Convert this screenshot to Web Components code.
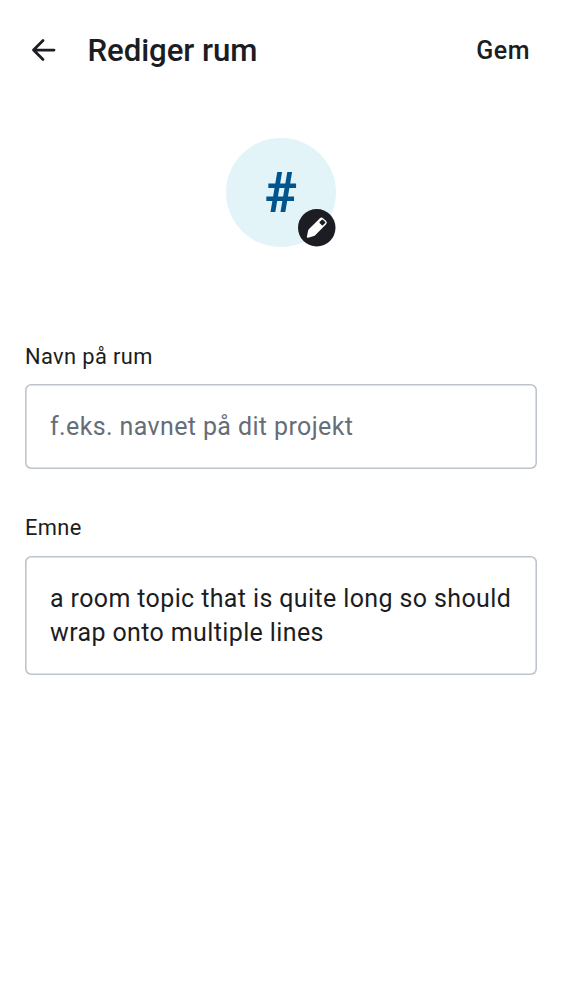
<!DOCTYPE html>
<html lang="da">
<head>
<meta charset="utf-8">
<title>Rediger rum</title>
<style>
html, body { margin: 0; background: #fff; }
body { font-family: Roboto, sans-serif; color: #1b1d22; }
</style>
</head>
<body>
<room-edit-page></room-edit-page>
<script>
class BaseElement extends HTMLElement {
  constructor() {
    super();
    this.attachShadow({ mode: "open" }).innerHTML = this.constructor.markup;
  }
}

class TopBar extends BaseElement {
  static markup = `
    <style>
      :host { display: flex; align-items: center; height: 100px; padding: 0 32px 0 31px; box-sizing: border-box; }
      svg { width: 25px; height: 25px; display: block; flex: none; }
      h1 { margin: 0 auto 0 31.4px; padding-top: 1px; font-size: 31.2px; line-height: 44px; font-weight: 500; letter-spacing: -.05px; white-space: nowrap; }
      .action { font-size: 25px; line-height: 38px; padding-top: 1px; font-weight: 500; letter-spacing: .5px; }
    </style>
    <svg viewBox="0 0 25 25" fill="none" stroke="currentColor" stroke-width="2.8" stroke-linecap="round" stroke-linejoin="round"><path d="M23 12.1H2.7M12 2.6L2.5 12.1l9.5 9.5"/></svg>
    <h1><slot></slot></h1>
    <span class="action"><slot name="action"></slot></span>`;
}

class RoomAvatar extends BaseElement {
  static markup = `
    <style>
      :host { display: grid; place-items: center; position: relative; width: 109.4px; height: 109.4px; border-radius: 50%; background: #e3f4f8; color: #00558f; font-size: 54.6px; line-height: 64px; font-weight: 700; }
      .symbol { padding-top: 2px; }
      .edit { position: absolute; right: 0; bottom: 0; width: 37.5px; height: 37.5px; }
    </style>
    <span class="symbol"><slot></slot></span>
    <svg class="edit" viewBox="0 0 37.5 37.5"><circle cx="18.75" cy="18.75" r="18.75" fill="#1b1d22"/><path fill="#fff" d="M8.9 27.4L10.2 21.2Q10.4 20.5 11 19.9L21.9 9.3Q23.5 7.9 25.1 9.3L28.1 12.1Q29.6 13.7 28.1 15.3L17.2 26.3Q16.6 26.9 15.9 27.1L10.1 28.8Q8.6 29 8.9 27.4Z"/><path fill="#1b1d22" d="M24.4 11.2l2.3 2.3-2.3 2.3-2.3-2.3z" stroke="#1b1d22" stroke-width="1.4" stroke-linejoin="round"/></svg>`;
}

class FormField extends BaseElement {
  static markup = `
    <style>
      :host { display: block; }
      .label { font-size: 21.85px; line-height: 31px; letter-spacing: .39px; margin-bottom: 12.5px; }
      .box { box-sizing: border-box; box-shadow: inset 0 0 0 1.56px #bdc4cc; border-radius: 6.25px; padding: 26px 21px 24.4px 25px; font-size: 24.97px; line-height: 34.3px; letter-spacing: .39px; }
      :host([placeholder]) .box { color: #656d77; }
    </style>
    <div class="label"><slot name="label"></slot></div>
    <div class="box"><slot></slot></div>`;
}

class RoomEditPage extends BaseElement {
  static markup = `
    <style>
      :host { display: flex; flex-direction: column; box-sizing: border-box; height: 1000px; }
      .avatar { display: flex; justify-content: center; padding-top: 37.5px; height: 240.8px; box-sizing: border-box; }
      .fields { display: flex; flex-direction: column; gap: 43.4px; padding: 0 25px; }
    </style>
    <top-bar>Rediger rum<span slot="action">Gem</span></top-bar>
    <div class="avatar"><room-avatar>#</room-avatar></div>
    <div class="fields">
      <form-field placeholder><span slot="label">Navn på rum</span>f.eks. navnet på dit projekt</form-field>
      <form-field><span slot="label">Emne</span>a room topic that is quite long so should wrap onto multiple lines</form-field>
    </div>`;
}

customElements.define("top-bar", TopBar);
customElements.define("room-avatar", RoomAvatar);
customElements.define("form-field", FormField);
customElements.define("room-edit-page", RoomEditPage);
</script>
</body>
</html>
